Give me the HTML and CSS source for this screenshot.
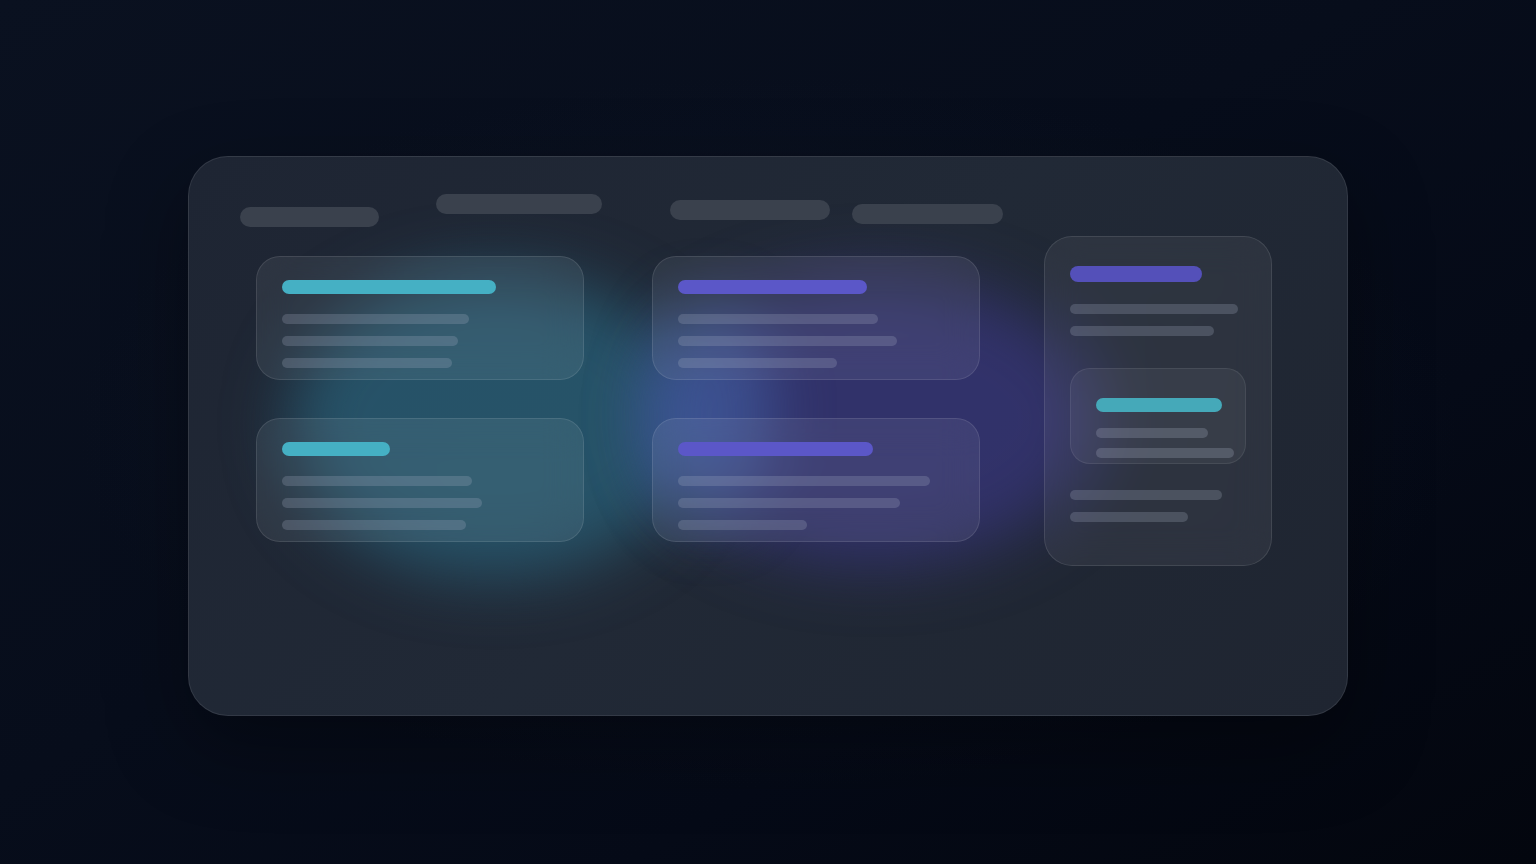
FILE: index.html
```html
<!DOCTYPE html>
<html lang="en">
<head>
<meta charset="utf-8">
<title>Glass dashboard skeleton</title>
<link rel="stylesheet" href="styles.css">
</head>
<body>
<main class="stage">
  <section class="panel">
    <div class="glow glow-teal"></div>
    <div class="glow glow-violet"></div>
    <div class="glow glow-blue"></div>

    <header class="topbar">
      <span class="pill pill-1"></span>
      <span class="pill pill-2"></span>
      <span class="pill pill-3"></span>
      <span class="pill pill-4"></span>
    </header>

    <div class="content">
      <div class="grid">
        <article class="card">
          <span class="bar title teal" style="width:214px"></span>
          <span class="bar line" style="width:187px"></span>
          <span class="bar line" style="width:176px"></span>
          <span class="bar line" style="width:170px"></span>
        </article>
        <article class="card">
          <span class="bar title violet" style="width:189px"></span>
          <span class="bar line" style="width:200px"></span>
          <span class="bar line" style="width:219px"></span>
          <span class="bar line" style="width:159px"></span>
        </article>
        <article class="card">
          <span class="bar title teal" style="width:108px"></span>
          <span class="bar line" style="width:190px"></span>
          <span class="bar line" style="width:200px"></span>
          <span class="bar line" style="width:184px"></span>
        </article>
        <article class="card">
          <span class="bar title violet" style="width:195px"></span>
          <span class="bar line" style="width:252px"></span>
          <span class="bar line" style="width:222px"></span>
          <span class="bar line" style="width:129px"></span>
        </article>
      </div>

      <aside class="side">
        <span class="bar side-title" style="width:132px"></span>
        <span class="bar line" style="width:168px"></span>
        <span class="bar line" style="width:144px"></span>
        <div class="inner">
          <span class="bar inner-title" style="width:126px"></span>
          <span class="bar inner-line" style="width:112px"></span>
          <span class="bar inner-line" style="width:138px"></span>
        </div>
        <span class="bar line" style="width:152px"></span>
        <span class="bar line" style="width:118px"></span>
      </aside>
    </div>
  </section>
</main>
</body>
</html>
```

FILE: styles.css
```css
* { box-sizing: border-box; }

html, body {
  margin: 0;
  height: 100%;
}

body {
  font-family: "Inter", "Liberation Sans", sans-serif;
  background:
    radial-gradient(ellipse 60% 55% at 50% 50%, rgba(18, 26, 44, 0.5), rgba(0, 0, 0, 0) 75%),
    linear-gradient(150deg, #0a1120 0%, #070d1b 45%, #050a17 70%, #03060e 100%);
  overflow: hidden;
}

.stage {
  width: 1536px;
  height: 864px;
  padding: 156px 0 0 188px;
}

.panel {
  position: relative;
  width: 1160px;
  height: 560px;
  border-radius: 40px;
  background: linear-gradient(135deg, #1e2533 0%, #212936 50%, #1f2531 100%);
  border: 1px solid rgba(255, 255, 255, 0.09);
  overflow: hidden;
  padding: 37px 0 0 51px;
  box-shadow: 0 30px 80px rgba(0, 0, 0, 0.35);
}

.glow {
  position: absolute;
  border-radius: 50%;
  pointer-events: none;
}

.glow-teal {
  left: 100px;
  top: 115px;
  width: 410px;
  height: 305px;
  background: rgba(44, 112, 138, 0.6);
  filter: blur(32px);
}

.glow-violet {
  left: 460px;
  top: 118px;
  width: 450px;
  height: 290px;
  background: rgba(64, 58, 150, 0.55);
  filter: blur(32px);
}

.glow-blue {
  left: 455px;
  top: 140px;
  width: 130px;
  height: 230px;
  background: rgba(70, 105, 175, 0.5);
  filter: blur(28px);
}

.topbar {
  position: relative;
  display: flex;
  align-items: flex-start;
  height: 33px;
}

.pill {
  display: block;
  flex-shrink: 0;
  height: 20px;
  border-radius: 10px;
  background: #3a414d;
}

.pill-1 { width: 139px; margin-top: 13px; }
.pill-2 { width: 166px; margin-left: 57px; }
.pill-3 { width: 160px; margin-left: 68px; margin-top: 6px; }
.pill-4 { width: 151px; margin-left: 22px; margin-top: 10px; }

.content {
  position: relative;
  display: flex;
  align-items: flex-start;
  margin-top: 9px;
}

.grid {
  display: grid;
  grid-template-columns: 328px 328px;
  grid-auto-rows: 124px;
  column-gap: 68px;
  row-gap: 38px;
  margin: 20px 0 0 16px;
}

.card {
  display: flex;
  flex-direction: column;
  align-items: flex-start;
  padding: 23px 25px 0;
  border-radius: 24px;
  background: rgba(255, 255, 255, 0.07);
  border: 1px solid rgba(255, 255, 255, 0.1);
  backdrop-filter: blur(18px);
}

.bar {
  display: block;
  flex-shrink: 0;
  border-radius: 7px;
}

.title {
  height: 14px;
  margin-bottom: 20px;
}

.teal { background: #45b0c4; }
.violet { background: #5b57c8; }

.line {
  height: 10px;
  border-radius: 5px;
  background: rgba(170, 180, 200, 0.24);
  margin-bottom: 12px;
}

.card .line:last-child { margin-bottom: 0; }

.side {
  display: flex;
  flex-direction: column;
  align-items: flex-start;
  width: 228px;
  height: 330px;
  flex-shrink: 0;
  margin-left: 64px;
  padding: 29px 25px 0;
  border-radius: 28px;
  background: rgba(255, 255, 255, 0.06);
  border: 1px solid rgba(255, 255, 255, 0.1);
  backdrop-filter: blur(18px);
}

.side-title {
  height: 16px;
  border-radius: 8px;
  background: #5450b9;
  margin-bottom: 22px;
}

.inner {
  display: flex;
  flex-direction: column;
  align-items: flex-start;
  flex-shrink: 0;
  width: 176px;
  height: 96px;
  margin: 20px 0 26px;
  padding: 29px 11px 0 25px;
  border-radius: 20px;
  background: rgba(255, 255, 255, 0.05);
  border: 1px solid rgba(255, 255, 255, 0.08);
}

.inner-title {
  height: 14px;
  background: #45a9b9;
  margin-bottom: 16px;
}

.inner-line {
  height: 10px;
  border-radius: 5px;
  background: rgba(170, 180, 200, 0.25);
  margin-bottom: 10px;
}
```
